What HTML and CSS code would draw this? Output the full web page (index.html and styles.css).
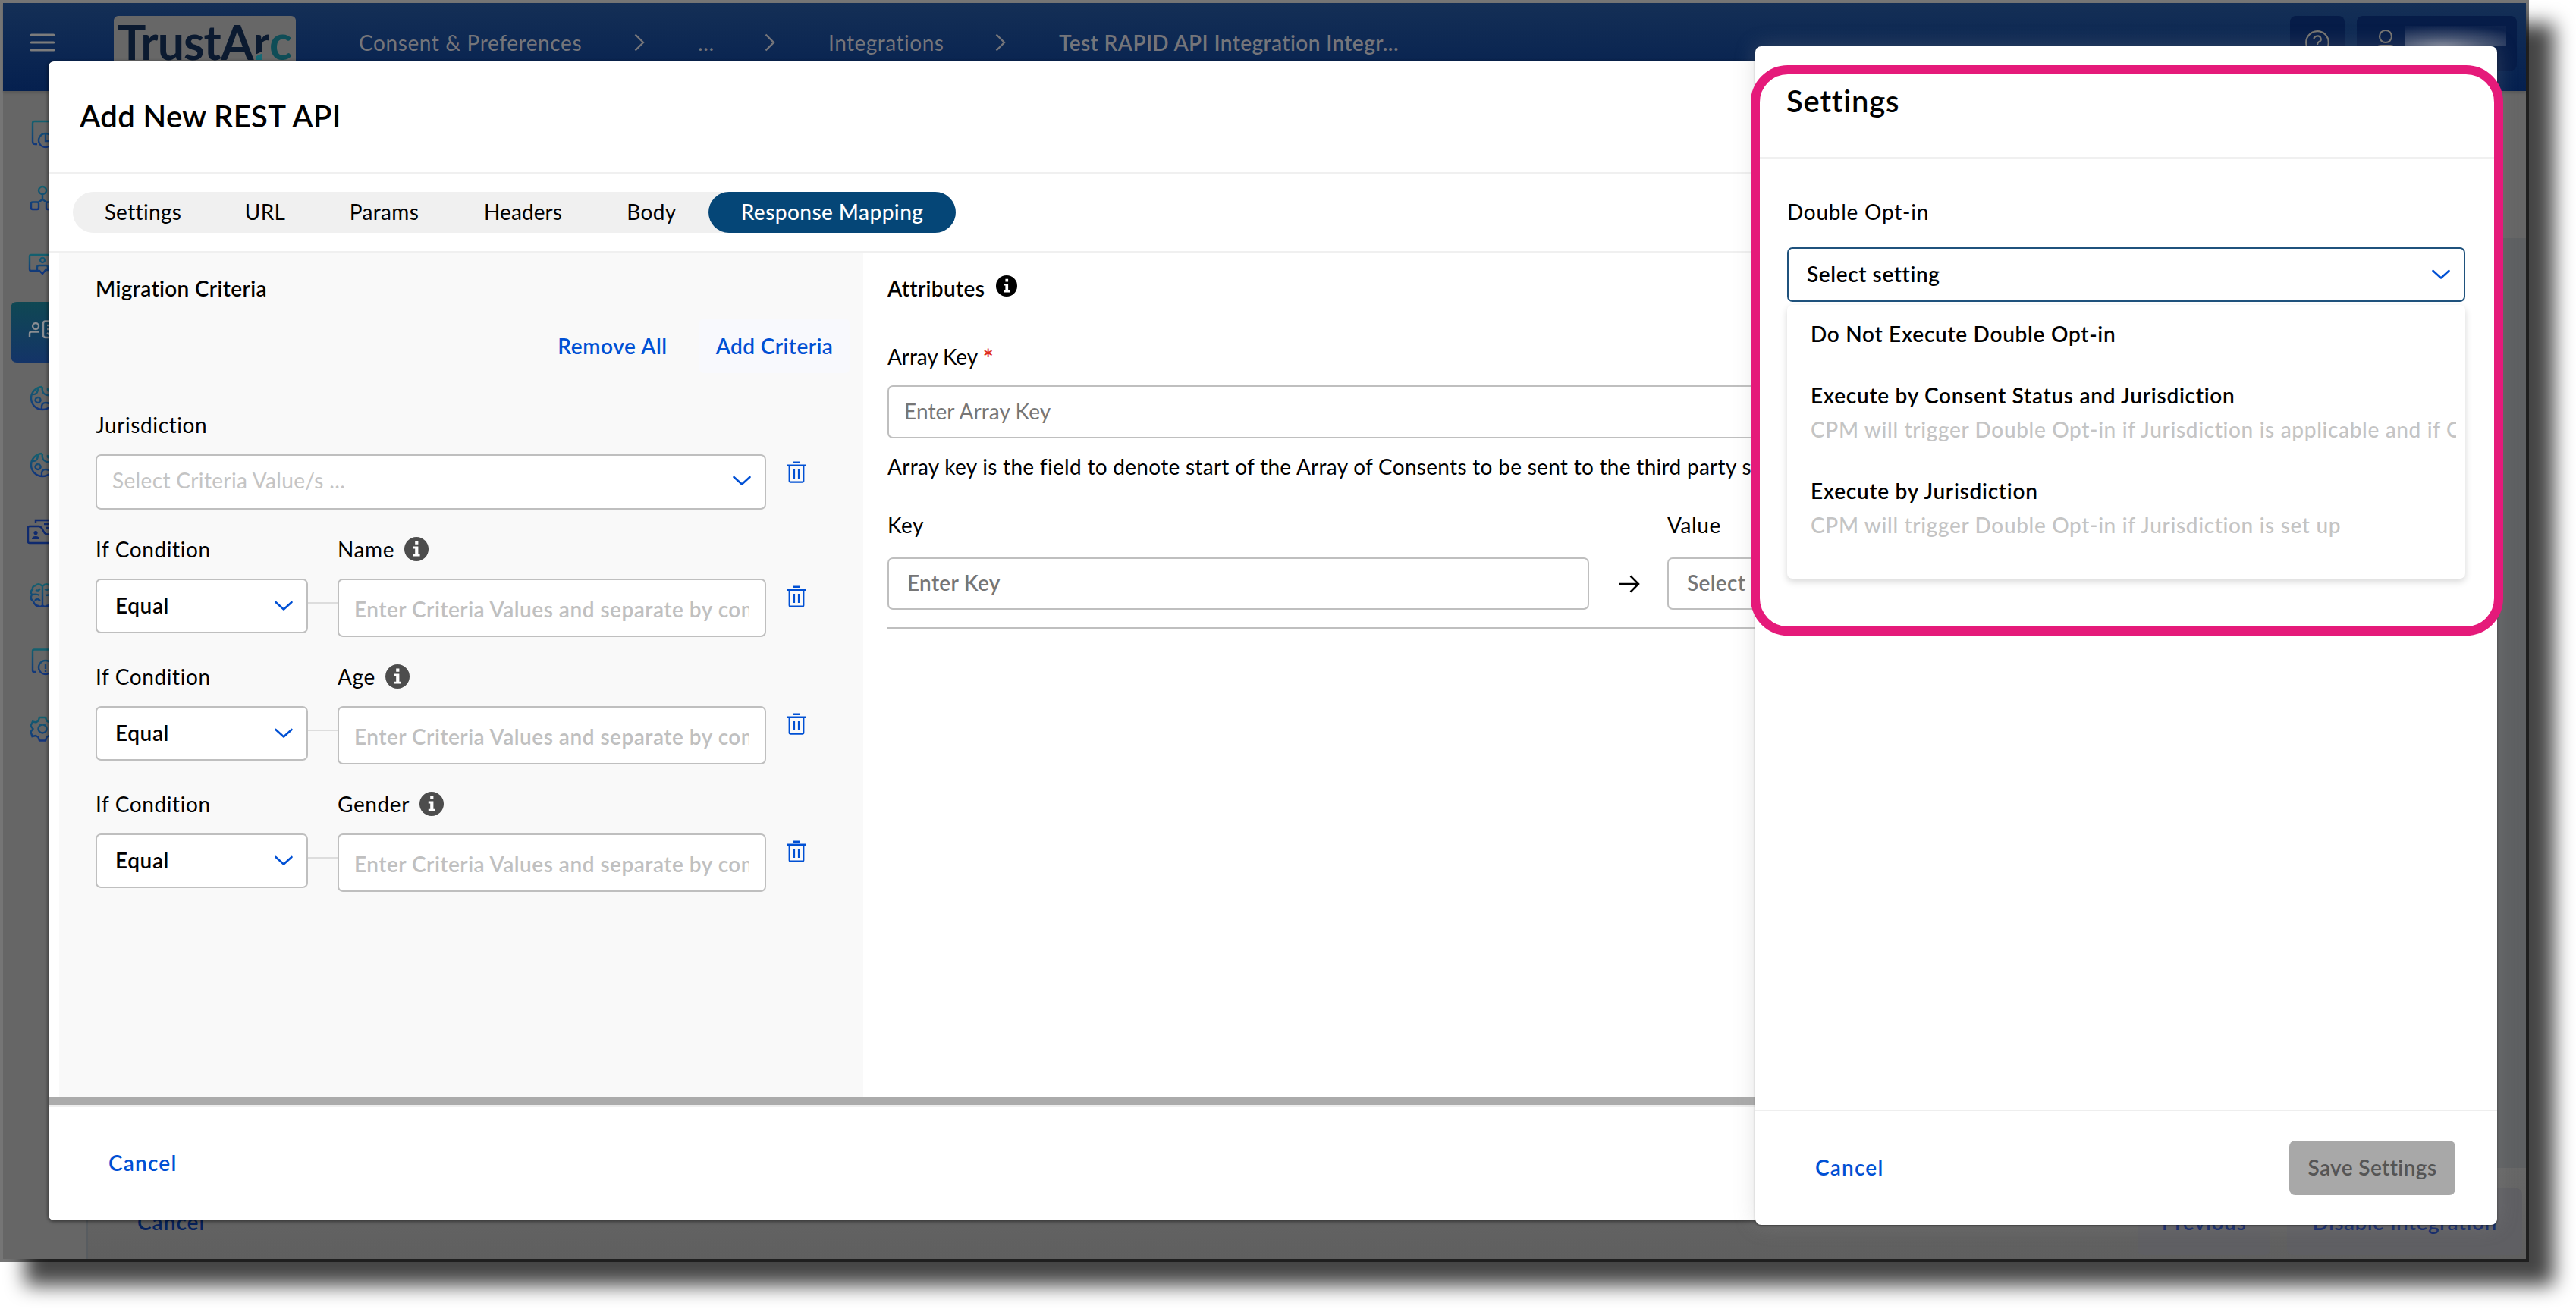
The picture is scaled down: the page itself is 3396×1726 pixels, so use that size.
FILE: index.html
```
<!DOCTYPE html>
<html lang="en">
<head>
<meta charset="utf-8">
<title>Add New REST API</title>
<link rel="stylesheet" href="styles.css">
</head>
<body>
<svg width="0" height="0" class="defs">
  <defs>
    <linearGradient id="nav" x1="0" y1="0" x2="0" y2="1"><stop offset="0" stop-color="#14606f"/><stop offset="1" stop-color="#12347c"/></linearGradient>
    <symbol id="chev" viewBox="0 0 24 14"><path d="M1.5 2 12 11.5 22.500 2" fill="none" stroke="#0050d4" stroke-width="2.600" stroke-linecap="round" stroke-linejoin="round"/></symbol>
    <symbol id="crumb" viewBox="0 0 14 24"><path d="M1.500 1.500 12 12 1.500 22.500" fill="none" stroke="#75757a" stroke-width="2.400"/></symbol>
    <symbol id="trash" viewBox="0 0 26 30"><path d="M9 1.800H17M.5 5.800H25.500" fill="none" stroke="#0050d4" stroke-width="2.600"/><path d="M3.700 6V26a1.600 1.600 0 0 0 1.600 1.600H20.700a1.600 1.600 0 0 0 1.600-1.600V6M10 11V23M16 11V23" fill="none" stroke="#0050d4" stroke-width="2.200"/></symbol>
    <symbol id="info" viewBox="0 0 32 32"><circle cx="16" cy="16" r="16"/><path d="M14.200 5.500h4.200v4.200h-4.200zM11.800 12.600h6.600v10.200h2.200v2.800h-8.800v-2.800h2.400v-7.400h-2.400z" fill="#fff"/></symbol>
  </defs>
</svg>
<div class="stage">
  <div class="drop"></div>
  <div class="shot">
    <div class="app">
      <header class="top">
        <svg class="burger" viewBox="0 0 32 26"><path d="M1.500 3H30.500M1.500 13H30.500M1.500 23H30.500" stroke="#7c7c7c" stroke-width="3.200" stroke-linecap="round"/></svg>
        <div class="logo">TrustA<span class="lr">r</span><span class="lc">c</span></div>
        <nav class="crumbs">
          <span class="c1">Consent &amp; Preferences</span>
          <svg><use href="#crumb"/></svg>
          <span class="c2">...</span>
          <svg><use href="#crumb"/></svg>
          <span class="c3">Integrations</span>
          <svg><use href="#crumb"/></svg>
          <span class="c4">Test RAPID API Integration Integr...</span>
        </nav>
        <div class="tile help"><svg viewBox="0 0 32 32"><circle cx="16" cy="16" r="14.800" fill="none" stroke="#777571" stroke-width="2.200"/><path d="M11.500 11.500a4.600 4 0 1 1 6.600 3.600q-2.100 1.100-2.100 4M16 21.500v2.500" fill="none" stroke="#777571" stroke-width="2.200"/></svg></div>
        <div class="tile user"><svg viewBox="0 0 32 40"><circle cx="16" cy="10" r="8" fill="none" stroke="#777571" stroke-width="2.200"/><path d="M4 36v-9q0-5 6-5h12q6 0 6 5v9" fill="none" stroke="#777571" stroke-width="2.200"/></svg><span class="redact"></span></div>
      </header>
      <div class="under">
        <aside class="side">
          <svg viewBox="4 129 110 88"><path d="M49 190H46.500q-3.500 0-3.500-3.500V162.500q0-2.500 2.500-2.500H72M60 176a9 9 0 1 0 .1 0M60 176V186H66"/></svg>
          <svg viewBox="4 217 110 88"><path d="M56 246a5 5 0 1 0 .1 0M56 256V263L50 267M56 263L62 267M43 266.500H49a2 2 0 0 1 2 2V274a2 2 0 0 1-2 2H43a2 2 0 0 1-2-2V268.500a2 2 0 0 1 2-2M63 266.500H69a2 2 0 0 1 2 2V274a2 2 0 0 1-2 2H63a2 2 0 0 1-2-2V268.500a2 2 0 0 1 2-2"/></svg>
          <svg viewBox="4 305 110 88"><path d="M49 357H41q-2 0-2-2V338q0-2 2-2H71q2 0 2 2V355M56 340a3 3 0 1 0 .1 0M49 357V352.500q0-2.500 2.500-2.500H60.500q2.500 0 2.500 2.500V356H60L56 361L52 357Z"/></svg>
          <div class="active"><svg viewBox="14 398 90 80"><path d="M47 419a4 4 0 1 0 .1 0M39 438V433q0-2.500 2.500-2.500H52M72 416.500H60q-3 0-3 3V435q0 3 3 3H72M62 422H68M62 427H68M62 432L66 435" transform="translate(0 0)"/></svg></div>
          <svg viewBox="4 481 110 88"><path d="M56 510a15 15 0 1 0 15 15M56 510q-1 6 2 9t9 2M42 520q8 1 8-8M50 524a3.500 3.500 0 1 0 .1 0M55 539q-1-8 5-8t6 4M63 512q-1 4 3 4"/></svg>
          <svg viewBox="4 569 110 88"><path d="M56 598a15 15 0 1 0 15 15M56 598q-1 6 2 9t9 2M42 608q8 1 8-8M50 612a3.500 3.500 0 1 0 .1 0M55 627q-1-8 5-8t6 4M63 600q-1 4 3 4"/></svg>
          <svg viewBox="4 657 110 88" class="flat"><path d="M47 690V686H74M39 694H51Q54 694 56 698L59 703Q60 704.500 63 704.500H74M74 716H39Q37 716 37 714V696Q37 694 39 694M58 691H64M60 696H64"/><path class="fill" d="M47 700a2.600 2.600 0 1 0 .1 0M42 711q0-4 5-4t5 4z"/></svg>
          <svg viewBox="4 745 110 88"><path d="M56 773Q51 768 47 772Q42 773 43 777Q39 780 42 784Q39 790 44 793Q46 799 51 799Q54 801 56 798ZM56 773Q61 768 65 772Q70 773 69 777Q73 780 70 784Q73 790 68 793Q66 799 61 799Q58 801 56 798M47 778q4 2 6-2M43 784q6-1 9 1M46 792q3-4 7 0M59 777q4 2 5-1M60 785q4-1 8 0"/></svg>
          <svg viewBox="4 833 110 88"><path d="M48 886H45q-2 0-2-2V858.500q0-2 2-2H72M60 871a9 9 0 1 0 .1 0M60 876V882M60 884V886"/></svg>
          <svg viewBox="4 921 110 88"><path d="M56 955.500a5.500 5.500 0 1 0 .1 0M52 946H60L61.500 950.500L65 952.500L69.500 951.500L72 957.500L69 961L72 965L69 971L64.500 970L61.500 972L60 976.500H52L50.500 972L47 970L42.500 971L40.500 965L43.500 961L40.500 957L43 951.500L47.500 952.500L50.500 950.500Z"/></svg>
        </aside>
        <main class="main">
          <div class="band"></div>
          <div class="foot0">
            <span class="cancel0">Cancel</span>
            <span class="b0 prev">Previous</span>
            <span class="b0 dis">Disable Integration</span>
          </div>
        </main>
      </div>
    </div>

    <section class="modal">
      <header class="mhead"><h1>Add New REST API</h1></header>
      <div class="tabrow">
        <div class="tabs">
          <span>Settings</span><span>URL</span><span>Params</span><span class="t0">Headers</span><span>Body</span><span class="on">Response Mapping</span>
        </div>
      </div>
      <div class="mbody">
        <div class="crit">
          <h2>Migration Criteria</h2>
          <div class="acts"><a class="rem">Remove All</a><a class="add">Add Criteria</a></div>
          <div class="jur">
            <label>Jurisdiction</label>
            <div class="line">
              <div class="box wide"><span>Select Criteria Value/s ...</span><svg class="chev"><use href="#chev"/></svg></div>
              <svg class="trash"><use href="#trash"/></svg>
            </div>
          </div>
          <div class="row">
            <label>If Condition</label><label class="nm"><span>Name</span><svg class="info"><use href="#info"/></svg></label>
            <div class="line">
              <div class="box eq"><span>Equal</span><svg class="chev"><use href="#chev"/></svg></div>
              <i></i>
              <div class="box val"><span>Enter Criteria Values and separate by comma</span></div>
              <svg class="trash"><use href="#trash"/></svg>
            </div>
          </div>
          <div class="row">
            <label>If Condition</label><label class="nm"><span>Age</span><svg class="info"><use href="#info"/></svg></label>
            <div class="line">
              <div class="box eq"><span>Equal</span><svg class="chev"><use href="#chev"/></svg></div>
              <i></i>
              <div class="box val"><span>Enter Criteria Values and separate by comma</span></div>
              <svg class="trash"><use href="#trash"/></svg>
            </div>
          </div>
          <div class="row">
            <label>If Condition</label><label class="nm"><span>Gender</span><svg class="info"><use href="#info"/></svg></label>
            <div class="line">
              <div class="box eq"><span>Equal</span><svg class="chev"><use href="#chev"/></svg></div>
              <i></i>
              <div class="box val"><span>Enter Criteria Values and separate by comma</span></div>
              <svg class="trash"><use href="#trash"/></svg>
            </div>
          </div>
        </div>
        <div class="attrs">
          <h2>Attributes <svg class="info"><use href="#info"/></svg></h2>
          <label class="ak">Array Key <b>*</b></label>
          <div class="box akbox"><span>Enter Array Key</span></div>
          <p>Array key is the field to denote start of the Array of Consents to be sent to the third party system</p>
          <div class="kv">
            <label>Key</label><span></span><label>Value</label>
            <div class="box kbox"><span>Enter Key</span></div>
            <svg class="arrow" viewBox="0 0 28 24"><path d="M0 12H26M15.500 1.500 26 12 15.500 22.500" fill="none" stroke="#000" stroke-width="2.500"/></svg>
            <div class="box kbox"><span>Select</span></div>
          </div>
        </div>
      </div>
      <div class="bar"></div>
      <footer class="mfoot"><a>Cancel</a></footer>
    </section>

    <section class="panel">
      <header class="mhead"><h1 class="ps">Settings</h1></header>
      <div class="pbody">
        <label class="doi">Double Opt-in</label>
        <div class="box sel"><span>Select setting</span><svg class="chev"><use href="#chev"/></svg></div>
        <div class="menu">
          <div class="opt"><strong>Do Not Execute Double Opt-in</strong></div>
          <div class="opt"><strong>Execute by Consent Status and Jurisdiction</strong><em>CPM will trigger Double Opt-in if Jurisdiction is applicable and if Consent Status is set</em></div>
          <div class="opt"><strong>Execute by Jurisdiction</strong><em>CPM will trigger Double Opt-in if Jurisdiction is set up</em></div>
        </div>
      </div>
      <footer class="pfoot"><a>Cancel</a><span class="save">Save Settings</span></footer>
    </section>
    <div class="mark"></div>
  </div>
</div>
</body>
</html>
```
FILE: styles.css
```
* { box-sizing: border-box; }
body {
  margin: 0;
  background: #fff;
  font: 400 28px/34px Lato, sans-serif;
  letter-spacing: .6px;
  font-variant-ligatures: none;
  color: #000;
}
h1, h2, p { margin: 0; font-weight: 500; }
h1 { font-size: 40px; line-height: 48px; letter-spacing: .35px; font-weight: 600; }
h2 { font-size: 28px; line-height: 34px; letter-spacing: .35px; font-weight: 600; }
svg { display: block; flex: none; }
label { display: block; white-space: nowrap; }
a { color: #0050d4; font-weight: 600; }
.defs { position: absolute; }

.stage { position: relative; width: 3396px; height: 1726px; overflow: hidden; }
.drop {
  position: absolute; left: 33px; top: 31px; width: 3334px; height: 1664px;
  background: rgba(0, 0, 0, .73); filter: blur(13px);
}
.shot {
  position: relative; width: 3334px; height: 1664px;
  border: 4px solid rgba(0, 0, 0, .54);
  background: #666; background-clip: padding-box;
}

/* dimmed application behind the dialogs */
.app { display: flex; flex-direction: column; height: 1656px; }
.top {
  display: flex; align-items: flex-start; height: 116px; flex: none;
  padding: 17px 12px 0 36px;
  background: linear-gradient(#142f56, #05204f);
  box-shadow: 0 3px 3px rgba(0, 0, 0, .12);
  color: #75757a; position: relative;
}
.burger { width: 32px; height: 26px; margin-top: 22px; }
.logo {
  width: 240px; height: 72px; margin-left: 78px; padding-left: 5px;
  background: #676767; border-radius: 6px; color: #0b1a30;
  font-size: 62.500px; font-weight: 700; line-height: 67px; letter-spacing: -.9px;
}
.lr { background: linear-gradient(155deg, #0b1a30 66%, #676767 67%, #676767 69%, #166a76 70%); -webkit-background-clip: text; background-clip: text; color: transparent; }
.lc { color: #0f4d57; }
.crumbs { display: flex; align-items: center; height: 70px; margin-left: 83px; }
.crumbs svg { width: 14px; height: 24px; margin-right: 70px; }
.crumbs span { white-space: nowrap; }
.c1 { width: 363px; }
.c2 { width: 88px; }
.c3 { width: 220px; letter-spacing: .5px; }
.c4 { font-weight: 600; letter-spacing: .4px; }
.tile { height: 72px; background: #061c48; border-radius: 8px; }
.help { width: 72px; margin-left: auto; padding: 19px 20px; }
.user { width: 211px; margin-left: 16px; padding: 17px 22px; position: relative; }
.help svg { width: 32px; height: 32px; }
.user svg { width: 32px; height: 40px; }
.redact {
  position: absolute; left: 63px; top: 13px; width: 134px; height: 27px;
  background: radial-gradient(ellipse 125px 27px at 50px 100%, rgba(150, 155, 170, .85), rgba(150, 155, 170, .4) 45%, rgba(150, 155, 170, .05) 100%);
}
.under { display: flex; flex: 1; min-height: 0; }
.side {
  width: 112px; padding-top: 9px; background: #666; border-right: 2px solid #585c60;
}
.side svg { width: 110px; height: 88px; fill: none; stroke: url(#nav); stroke-width: 2.400; }
.side .flat { stroke: #0f2a6e; }
.side .flat .fill { fill: #0f2a6e; stroke: none; }
.active { height: 80px; margin: 5px 0 3px 10px; padding-top: 7px; border-radius: 8px; background: linear-gradient(#0f4853, #143468); }
.side .active svg { width: 90px; height: 80px; margin-bottom: -7px; stroke: #8a8d92; }
.main { flex: 1; display: flex; flex-direction: column; background: #666; }
.band { flex: 1; margin-top: 194px; background: #5e6062; }
.foot0 {
  display: flex; height: 120px; padding: 27px 5px 5px 65px;
  align-items: center; background: linear-gradient(#676767, #5f5f5f); font-weight: 600;
}
.cancel0 { flex: 1; color: #06225c; letter-spacing: 1px; }
.b0 { display: flex; align-items: center; justify-content: center; height: 88px; background: #5f5f63; border-radius: 8px; color: #12286a; }
.prev { width: 175px; margin-right: 22px; }
.dis { width: 310px; letter-spacing: .45px; }

/* main dialog */
.modal {
  position: absolute; left: 60px; top: 77px; width: 3190px; height: 1528px;
  display: flex; flex-direction: column;
  background: #fff; border-radius: 7px; box-shadow: 0 1px 4px 1px rgba(0, 0, 0, .45);
}
.mhead { height: 148px; flex: none; padding: 48px 41px 0; border-bottom: 2px solid #f0f0f0; }
.tabrow { height: 104px; flex: none; padding: 24px 32px; border-bottom: 2px solid #f0f0f0; }
.tabs {
  display: grid; grid-template-columns: 185px 137px 177px 189px 150px 326px;
  width: 1164px; height: 54px; border-radius: 27px; background: #f0f0f0;
  line-height: 52px; text-align: center; letter-spacing: .35px;
}
.tabs .t0 { letter-spacing: .1px; }
.tabs .on { background: #054677; color: #fff; border-radius: 27px; font-weight: 500; letter-spacing: .45px; }
.mbody { display: flex; height: 1114px; padding-left: 14px; }
.crit { width: 1060px; background: #f9f9f9; padding: 30px 0 0 48px; }
.acts { display: flex; justify-content: flex-end; gap: 17px; margin: 23px 17px 0 0; line-height: 72px; text-align: center; }
.acts a { height: 72px; border-radius: 8px; letter-spacing: .4px; }
.acts .rem { width: 193px; letter-spacing: .6px; }
.add { width: 200px; background: #f8f9fd; }
.jur { height: 164px; margin-top: 51px; }
.row { height: 168px; display: grid; grid-template: 34px auto / 319px 1fr; align-content: start; }
.line { display: flex; align-items: flex-start; margin-top: 22px; grid-column: 1 / 3; }
.nm { display: flex; align-items: center; gap: 13px; }
.nm .info { width: 32px; height: 32px; fill: #4d4d4d; }
.box { display: flex; align-items: center; background: #fff; border: 2px solid #bfbfbf; border-radius: 7px; white-space: nowrap; }
.box span { flex: 1; overflow: hidden; position: relative; top: -1px; }
.chev { width: 24px; height: 14px; }
.trash { width: 26px; height: 30px; margin: 9px 0 0 27px; }
.wide { width: 884px; height: 73px; padding: 0 18px 4px 20px; color: #c4c4c4; letter-spacing: .35px; }
.eq { width: 280px; height: 72px; padding: 0 18px 0 24px; font-weight: 600; }
.line i { width: 39px; height: 2px; margin-top: 31px; background: #ddd; }
.val { width: 565px; height: 77px; padding: 5px 20px 0 20px; color: #c0c0c0; font-weight: 600; letter-spacing: .5px; }
.attrs { flex: 1; padding: 30px 0 0 32px; overflow: hidden; }
.attrs h2 { display: flex; gap: 15px; }
.attrs h2 .info { width: 28px; height: 28px; }
.ak { margin-top: 56px; letter-spacing: -.1px; }
.ak b { color: #e02d20; font-weight: 600; font-size: 34px; line-height: 20px; vertical-align: -5px; }
.akbox { height: 70px; margin-top: 21px; padding: 0 20px; color: #767676; letter-spacing: .1px; }
.attrs p { margin-top: 20px; white-space: nowrap; font-weight: 400; letter-spacing: .29px; }
.kv {
  display: grid; grid-template-columns: 925px 103px 1fr; row-gap: 26px;
  align-items: center; justify-items: stretch; margin-top: 43px; padding-bottom: 23px; border-bottom: 2px solid #bfbfbf;
}
.kbox { height: 69px; padding: 0 24px; color: #767676; font-weight: 600; letter-spacing: .3px; }
.kbox span { top: -2px; }
.arrow { width: 28px; height: 24px; justify-self: center; position: relative; left: 1px; }
.bar { height: 10px; background: #ababab; }
.mfoot { flex: 1; display: flex; align-items: center; border-top: 2px solid #eee; padding: 0 0 2px 79px; border-radius: 0 0 7px 7px; }
.mfoot a, .pfoot a { letter-spacing: 1.200px; }

/* settings side panel */
.panel {
  position: absolute; left: 2310px; top: 57px; width: 978px; height: 1554px;
  display: flex; flex-direction: column;
  background: #fff; border-radius: 8px;
  box-shadow: 0 1px 3px rgba(0, 0, 0, .45), 0 0 28px rgba(150, 150, 150, .28);
}
.ps { letter-spacing: .8px; }
.pbody { flex: 1; padding: 53px 42px 0; }
.doi { letter-spacing: .75px; }
.sel { height: 72px; margin-top: 30px; padding: 0 18px 0 24px; border-color: #1f527d; font-weight: 600; }
.menu {
  height: 361px; margin-top: 4px; padding: 21px 12px 0 31px; background: #fff;
  border-radius: 7px; box-shadow: 0 4px 10px rgba(0, 0, 0, .16);
}
.opt { margin-bottom: 47px; white-space: nowrap; overflow: hidden; letter-spacing: .72px; }
.opt strong { display: block; font-weight: 600; }
.opt em { display: block; font-style: normal; font-weight: 500; margin-top: 11px; color: #c4c4c4; letter-spacing: .66px; overflow: hidden; }
.pfoot { height: 152px; display: flex; align-items: center; justify-content: space-between; border-top: 2px solid #eee; padding: 0 55px 0 79px; }
.pfoot a { position: relative; top: -1px; }
.save { width: 219px; height: 72px; border-radius: 8px; background: #a8a8a8; color: #555; font-weight: 600; text-align: center; line-height: 70px; letter-spacing: .4px; }
.mark { position: absolute; left: 2304px; top: 82px; width: 992px; height: 752px; border: 12px solid #e51a7a; border-radius: 49px; }
```
